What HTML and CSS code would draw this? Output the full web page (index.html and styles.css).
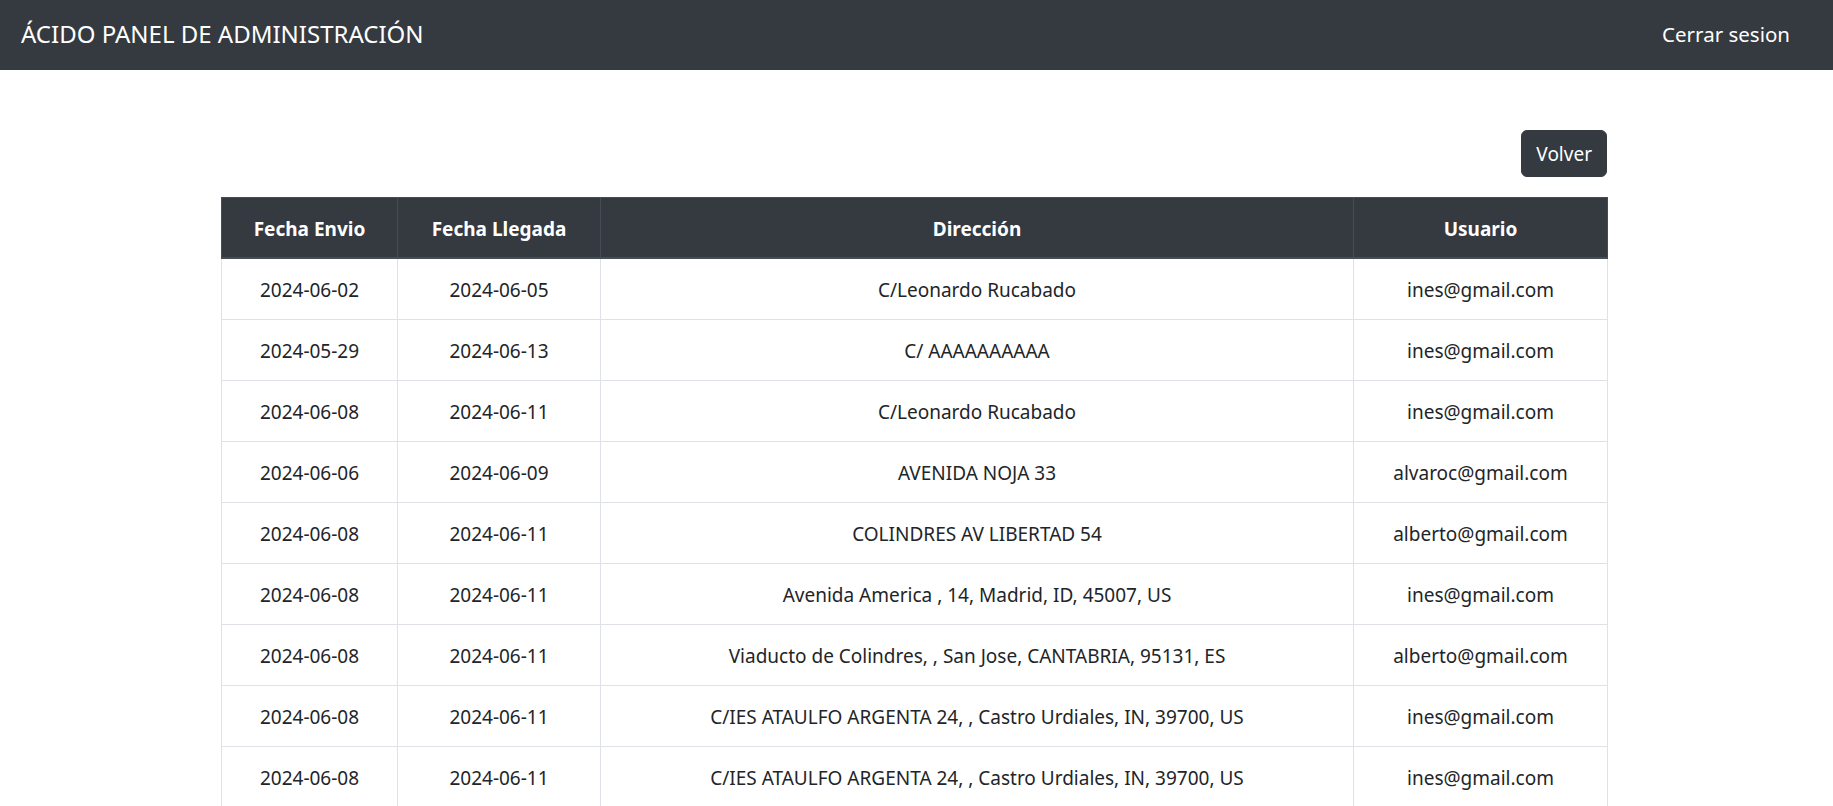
FILE: index.html
```html
<!DOCTYPE html>
<html lang="es">
<head>
<meta charset="utf-8">
<title>Ácido Panel de Administración</title>
<link rel="stylesheet" href="styles.css">
</head>
<body>
<nav class="navbar">
  <span class="brand">ÁCIDO PANEL DE ADMINISTRACIÓN</span>
  <a class="nav-link" href="#">Cerrar sesion</a>
</nav>
<main class="container">
  <div class="actions">
    <button class="btn-dark" type="button">Volver</button>
  </div>
  <table class="orders">
    <colgroup>
      <col class="c-envio">
      <col class="c-llegada">
      <col class="c-dir">
      <col class="c-user">
    </colgroup>
    <thead>
      <tr><th>Fecha Envio</th><th>Fecha Llegada</th><th>Dirección</th><th>Usuario</th></tr>
    </thead>
    <tbody>
      <tr><td>2024-06-02</td><td>2024-06-05</td><td>C/Leonardo Rucabado</td><td>ines@gmail.com</td></tr>
      <tr><td>2024-05-29</td><td>2024-06-13</td><td>C/ AAAAAAAAAA</td><td>ines@gmail.com</td></tr>
      <tr><td>2024-06-08</td><td>2024-06-11</td><td>C/Leonardo Rucabado</td><td>ines@gmail.com</td></tr>
      <tr><td>2024-06-06</td><td>2024-06-09</td><td>AVENIDA NOJA 33</td><td>alvaroc@gmail.com</td></tr>
      <tr><td>2024-06-08</td><td>2024-06-11</td><td>COLINDRES AV LIBERTAD 54</td><td>alberto@gmail.com</td></tr>
      <tr><td>2024-06-08</td><td>2024-06-11</td><td>Avenida America , 14, Madrid, ID, 45007, US</td><td>ines@gmail.com</td></tr>
      <tr><td>2024-06-08</td><td>2024-06-11</td><td>Viaducto de Colindres, , San Jose, CANTABRIA, 95131, ES</td><td>alberto@gmail.com</td></tr>
      <tr><td>2024-06-08</td><td>2024-06-11</td><td>C/IES ATAULFO ARGENTA 24, , Castro Urdiales, IN, 39700, US</td><td>ines@gmail.com</td></tr>
      <tr><td>2024-06-08</td><td>2024-06-11</td><td>C/IES ATAULFO ARGENTA 24, , Castro Urdiales, IN, 39700, US</td><td>ines@gmail.com</td></tr>
    </tbody>
  </table>
</main>
</body>
</html>
```

FILE: styles.css
```css
* { box-sizing: border-box; }

html, body {
  margin: 0;
  padding: 0;
  background: #fff;
}

body {
  font-family: "Noto Sans", "Open Sans", sans-serif;
  font-size: 19px;
  line-height: 30px;
  color: #212529;
}

.navbar {
  height: 70px;
  background: #343a40;
  display: flex;
  align-items: center;
  justify-content: space-between;
  padding: 0 43px 2px 21px;
}

.brand {
  color: #fff;
  font-size: 24px;
  line-height: 30px;
}

.nav-link {
  color: #fff;
  font-size: 20.5px;
  text-decoration: none;
}

.container {
  width: 1386px;
  margin-left: 221px;
  padding-top: 60px;
}

.actions {
  display: flex;
  justify-content: flex-end;
  margin-bottom: 20px;
}

.btn-dark {
  font-family: inherit;
  font-size: 19px;
  line-height: 30px;
  color: #fff;
  background: #343a40;
  border: 1px solid #343a40;
  border-radius: 6px;
  padding: 8px 14px 7px;
  cursor: pointer;
}

.orders {
  width: 100%;
  border-collapse: collapse;
  table-layout: fixed;
}

.c-envio { width: 176px; }
.c-llegada { width: 203px; }
.c-dir { width: 753px; }
.c-user { width: 254px; }

.orders th,
.orders td {
  text-align: center;
  padding: 16px 10px 14px;
  border: 1px solid #dee2e6;
  white-space: nowrap;
}

.orders thead th {
  background: #343a40;
  color: #fff;
  font-weight: 700;
  font-size: 19px;
  border-color: #454d55;
  border-bottom-width: 2px;
  padding: 16px 10px 13px;
}
```
